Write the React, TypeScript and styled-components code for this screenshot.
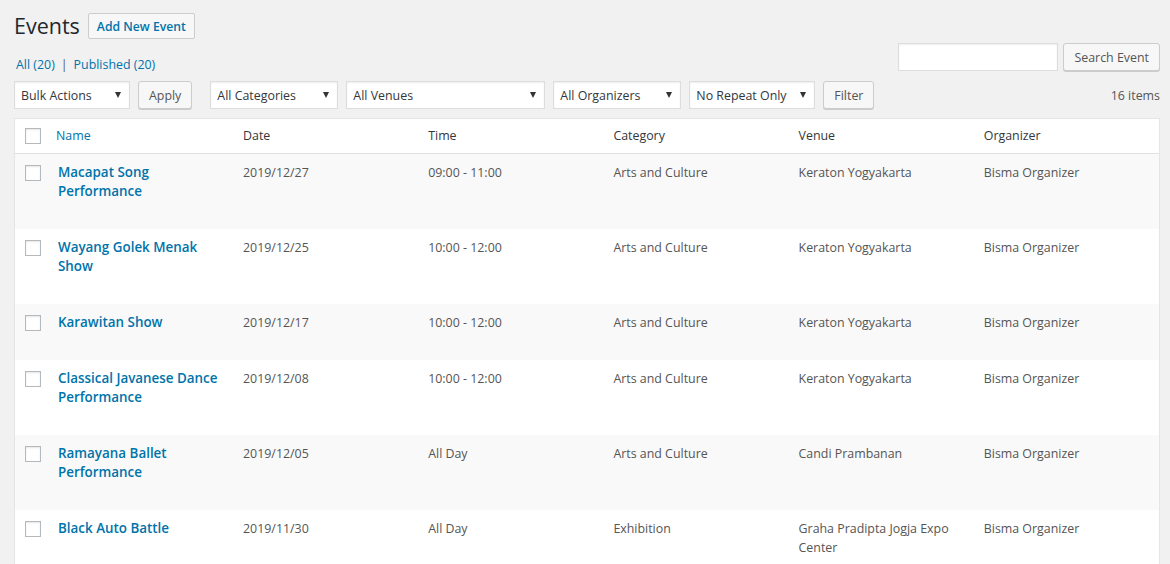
import React from "react";
import styled, { createGlobalStyle } from "styled-components";

const Global = createGlobalStyle`
  html, body { margin: 0; padding: 0; background: #f1f1f1; }
  body { font-family: "Open Sans", "Noto Sans", sans-serif; font-size: 12.4px; color: #444; }
  * { box-sizing: border-box; }
`;

const Wrap = styled.div`
  padding: 12px 10px 0 14px;
  width: 1170px;
`;

const TitleRow = styled.div`
  display: flex;
  align-items: center;
  gap: 8px;
`;

const H1 = styled.h1`
  margin: 0;
  font-size: 21.5px;
  font-weight: 400;
  line-height: 26px;
  color: #23282d;
`;

const TitleAction = styled.a`
  display: inline-flex;
  align-items: center;
  height: 26px;
  padding: 0 8px;
  margin-top: 1px;
  border: 1px solid #ccc;
  border-radius: 2px;
  background: #f7f7f7;
  color: #0073aa;
  font-weight: 600;
  font-size: 12.2px;
`;

const SubRow = styled.div`
  display: flex;
  justify-content: space-between;
  align-items: flex-start;
  margin-top: 4px;
`;

const SubList = styled.div`
  margin-top: 12px;
  padding-left: 2px;
  color: #555;
  font-size: 12.4px;
  line-height: 19px;
  display: flex;
  gap: 6px;
`;

const SubLink = styled.a`
  color: #0073aa;
`;

const SearchBox = styled.div`
  display: flex;
  gap: 5px;
`;

const TextInput = styled.div`
  width: 160px;
  height: 28px;
  background: #fff;
  border: 1px solid #ddd;
  box-shadow: inset 0 1px 2px rgba(0,0,0,0.07);
`;

const Button = styled.div`
  display: inline-flex;
  align-items: center;
  justify-content: center;
  height: 28px;
  padding: 0 10px;
  border: 1px solid #ccc;
  border-radius: 3px;
  background: #f7f7f7;
  box-shadow: 0 1px 0 #ccc;
  color: #555;
  font-size: 12.4px;
  white-space: nowrap;
`;

const NavRow = styled.div`
  display: flex;
  align-items: center;
  margin-top: 7px;
  height: 28px;
`;

const Group = styled.div<{ $ml?: number }>`
  display: flex;
  align-items: center;
  gap: 8px;
  margin-left: ${(p) => p.$ml ?? 0}px;
`;

const Select = styled.div<{ $w: number }>`
  position: relative;
  width: ${(p) => p.$w}px;
  height: 28px;
  background: #fff;
  border: 1px solid #ddd;
  box-shadow: inset 0 1px 2px rgba(0,0,0,0.07);
  color: #32373c;
  font-size: 12.4px;
  display: flex;
  align-items: center;
  padding-left: 6px;
  white-space: nowrap;
  overflow: hidden;
`;

const Arrow = styled.span`
  position: absolute;
  right: 8px;
  top: 10px;
  width: 0;
  height: 0;
  border-left: 3px solid transparent;
  border-right: 3px solid transparent;
  border-top: 6px solid #333;
`;

const Count = styled.div`
  margin-left: auto;
  color: #555;
  font-size: 12.4px;
`;

const Table = styled.table`
  margin-top: 9px;
  width: 1146px;
  border-collapse: separate;
  border-spacing: 0;
  table-layout: fixed;
  border: 1px solid #e5e5e5;
  box-shadow: 0 1px 1px rgba(0,0,0,0.04);
  background: #fff;
`;

const Th = styled.th<{ $w?: number }>`
  ${(p) => (p.$w ? `width: ${p.$w}px;` : "")}
  height: 35px;
  text-align: left;
  font-weight: 400;
  font-size: 12.4px;
  line-height: 19px;
  color: #32373c;
  padding: 7px 10px 8px;
  border-bottom: 1px solid #e1e1e1;
`;

const CheckTh = styled.th`
  width: 31px;
  height: 35px;
  padding: 9px 0 0 10px;
  vertical-align: top;
  border-bottom: 1px solid #e1e1e1;
`;

const HeadLink = styled.span`
  color: #0073aa;
`;

const Tr = styled.tr<{ $odd: boolean }>`
  background: ${(p) => (p.$odd ? "#f9f9f9" : "#fff")};
`;

const CheckTd = styled.td`
  padding: 11px 0 0 10px;
  vertical-align: top;
`;

const Box = styled.span`
  display: block;
  width: 16px;
  height: 16px;
  border: 1px solid #b4b9be;
  background: #fff;
  box-shadow: inset 0 1px 2px rgba(0,0,0,0.1);
`;

const Td = styled.td`
  padding: 9px 10px 7px;
  vertical-align: top;
  font-size: 12.4px;
  line-height: 19px;
  color: #555;
`;

const TitleTd = styled(Td)`
  padding-left: 12px;
`;

const RowTitle = styled.strong`
  display: block;
  color: #0073aa;
  font-weight: 600;
  font-size: 13.4px;
  line-height: 19px;
`;

const RowActions = styled.div`
  height: 21px;
`;

type Ev = { name: string; date: string; time: string; cat: string; venue: string; org: string };

const events: Ev[] = [
  { name: "Macapat Song Performance", date: "2019/12/27", time: "09:00 - 11:00", cat: "Arts and Culture", venue: "Keraton Yogyakarta", org: "Bisma Organizer" },
  { name: "Wayang Golek Menak Show", date: "2019/12/25", time: "10:00 - 12:00", cat: "Arts and Culture", venue: "Keraton Yogyakarta", org: "Bisma Organizer" },
  { name: "Karawitan Show", date: "2019/12/17", time: "10:00 - 12:00", cat: "Arts and Culture", venue: "Keraton Yogyakarta", org: "Bisma Organizer" },
  { name: "Classical Javanese Dance Performance", date: "2019/12/08", time: "10:00 - 12:00", cat: "Arts and Culture", venue: "Keraton Yogyakarta", org: "Bisma Organizer" },
  { name: "Ramayana Ballet Performance", date: "2019/12/05", time: "All Day", cat: "Arts and Culture", venue: "Candi Prambanan", org: "Bisma Organizer" },
  { name: "Black Auto Battle", date: "2019/11/30", time: "All Day", cat: "Exhibition", venue: "Graha Pradipta Jogja Expo Center", org: "Bisma Organizer" },
];

export default function App() {
  return (
    <Wrap>
      <Global />
      <TitleRow>
        <H1>Events</H1>
        <TitleAction>Add New Event</TitleAction>
      </TitleRow>
      <SubRow>
        <SubList>
          <SubLink>All (20)</SubLink>
          <span>|</span>
          <SubLink>Published (20)</SubLink>
        </SubList>
        <SearchBox>
          <TextInput />
          <Button>Search Event</Button>
        </SearchBox>
      </SubRow>
      <NavRow>
        <Group>
          <Select $w={116}>Bulk Actions<Arrow /></Select>
          <Button>Apply</Button>
        </Group>
        <Group $ml={18}>
          <Select $w={128}>All Categories<Arrow /></Select>
          <Select $w={199}>All Venues<Arrow /></Select>
          <Select $w={128}>All Organizers<Arrow /></Select>
          <Select $w={126}>No Repeat Only<Arrow /></Select>
          <Button>Filter</Button>
        </Group>
        <Count>16 items</Count>
      </NavRow>
      <Table>
        <thead>
          <tr>
            <CheckTh><Box /></CheckTh>
            <Th $w={187}><HeadLink>Name</HeadLink></Th>
            <Th>Date</Th>
            <Th>Time</Th>
            <Th>Category</Th>
            <Th>Venue</Th>
            <Th>Organizer</Th>
          </tr>
        </thead>
        <tbody>
          {events.map((e, i) => (
            <Tr key={e.name} $odd={i % 2 === 0}>
              <CheckTd><Box /></CheckTd>
              <TitleTd>
                <RowTitle>{e.name}</RowTitle>
                <RowActions />
              </TitleTd>
              <Td>{e.date}</Td>
              <Td>{e.time}</Td>
              <Td>{e.cat}</Td>
              <Td>{e.venue}</Td>
              <Td>{e.org}</Td>
            </Tr>
          ))}
        </tbody>
      </Table>
    </Wrap>
  );
}
